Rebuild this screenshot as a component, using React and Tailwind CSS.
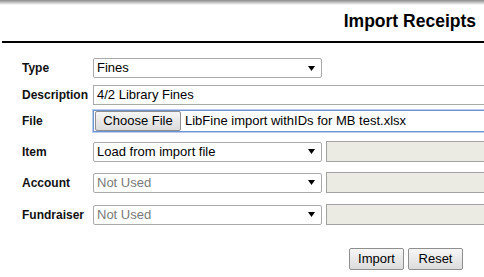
const Arrow = () => (
    <svg width="7" height="7" viewBox="0 0 7 7" className="shrink-0">
        <polygon points="0,1 7,1 3.5,6" fill="#000" />
    </svg>
);

const FakeSelect = ({ value, disabled }) => (
    <div className="w-[229px] h-[20px] border border-[#a9a9a9] rounded-[2px] bg-white flex items-center justify-between pl-[3px] pr-[6px]">
        <span className={`text-[13px] ${disabled ? 'text-[#7a7a7a]' : 'text-black'}`}>{value}</span>
        <Arrow />
    </div>
);

const ReadOnlyBox = () => (
    <div className="ml-[4px] flex-1 h-[21px] border border-[#a3a3a3] border-r-0 bg-[#ebebe4]" />
);

const Row = ({ label, className, children }) => (
    <div className={`flex items-center ${className}`}>
        <div className="w-[71px] shrink-0 text-[12px] font-bold text-[#111]">{label}</div>
        {children}
    </div>
);

const App = () => {
    return (
        <div className="w-[484px] h-[277px] bg-white overflow-hidden font-['Liberation_Sans',Arial,sans-serif] text-black">
            <div className="h-[5px] bg-gradient-to-b from-[#8c8c8c] to-white" />
            <div className="h-[36px] flex justify-end items-start pr-[8px] pt-[4px]">
                <h1 className="text-[17.5px] font-bold leading-[24px]">Import Receipts</h1>
            </div>
            <div className="ml-[2px] h-[2px] bg-black" />

            <div className="pl-[22px]">
                <Row label="Type" className="mt-[15px]">
                    <FakeSelect value="Fines" />
                </Row>
                <Row label="Description" className="mt-[7px]">
                    <div className="flex-1 h-[20px] border border-[#a9a9a9] border-r-0 flex items-center pl-[3px] text-[13px]">4/2 Library Fines</div>
                </Row>
                <Row label="File" className="mt-[5px]">
                    <div className="flex-1 h-[22px] border border-[#6f93d0] border-r-0 shadow-[0_0_0_1px_#b9cdee] flex items-center pl-px text-[13px]">
                        <div className="w-[86px] h-[20px] border border-[#8f8f8f] rounded-[2px] bg-gradient-to-b from-[#f6f6f6] to-[#dcdcdc] flex items-center justify-center">Choose File</div>
                        <span className="ml-[4px]">LibFine import withIDs for MB test.xlsx</span>
                    </div>
                </Row>
                <Row label="Item" className="mt-[9px]">
                    <FakeSelect value="Load from import file" />
                    <ReadOnlyBox />
                </Row>
                <Row label="Account" className="mt-[10px]">
                    <FakeSelect value="Not Used" disabled />
                    <ReadOnlyBox />
                </Row>
                <Row label="Fundraiser" className="mt-[11px]">
                    <FakeSelect value="Not Used" disabled />
                    <ReadOnlyBox />
                </Row>
            </div>

            <div className="flex justify-end gap-[4px] pr-[21px] mt-[23px]">
                <button className="w-[55px] h-[22px] border border-[#8f8f8f] rounded-[2px] bg-gradient-to-b from-[#f6f6f6] to-[#dcdcdc] text-[13px]">Import</button>
                <button className="w-[55px] h-[22px] border border-[#8f8f8f] rounded-[2px] bg-gradient-to-b from-[#f6f6f6] to-[#dcdcdc] text-[13px]">Reset</button>
            </div>
        </div>
    );
};

export default App;
